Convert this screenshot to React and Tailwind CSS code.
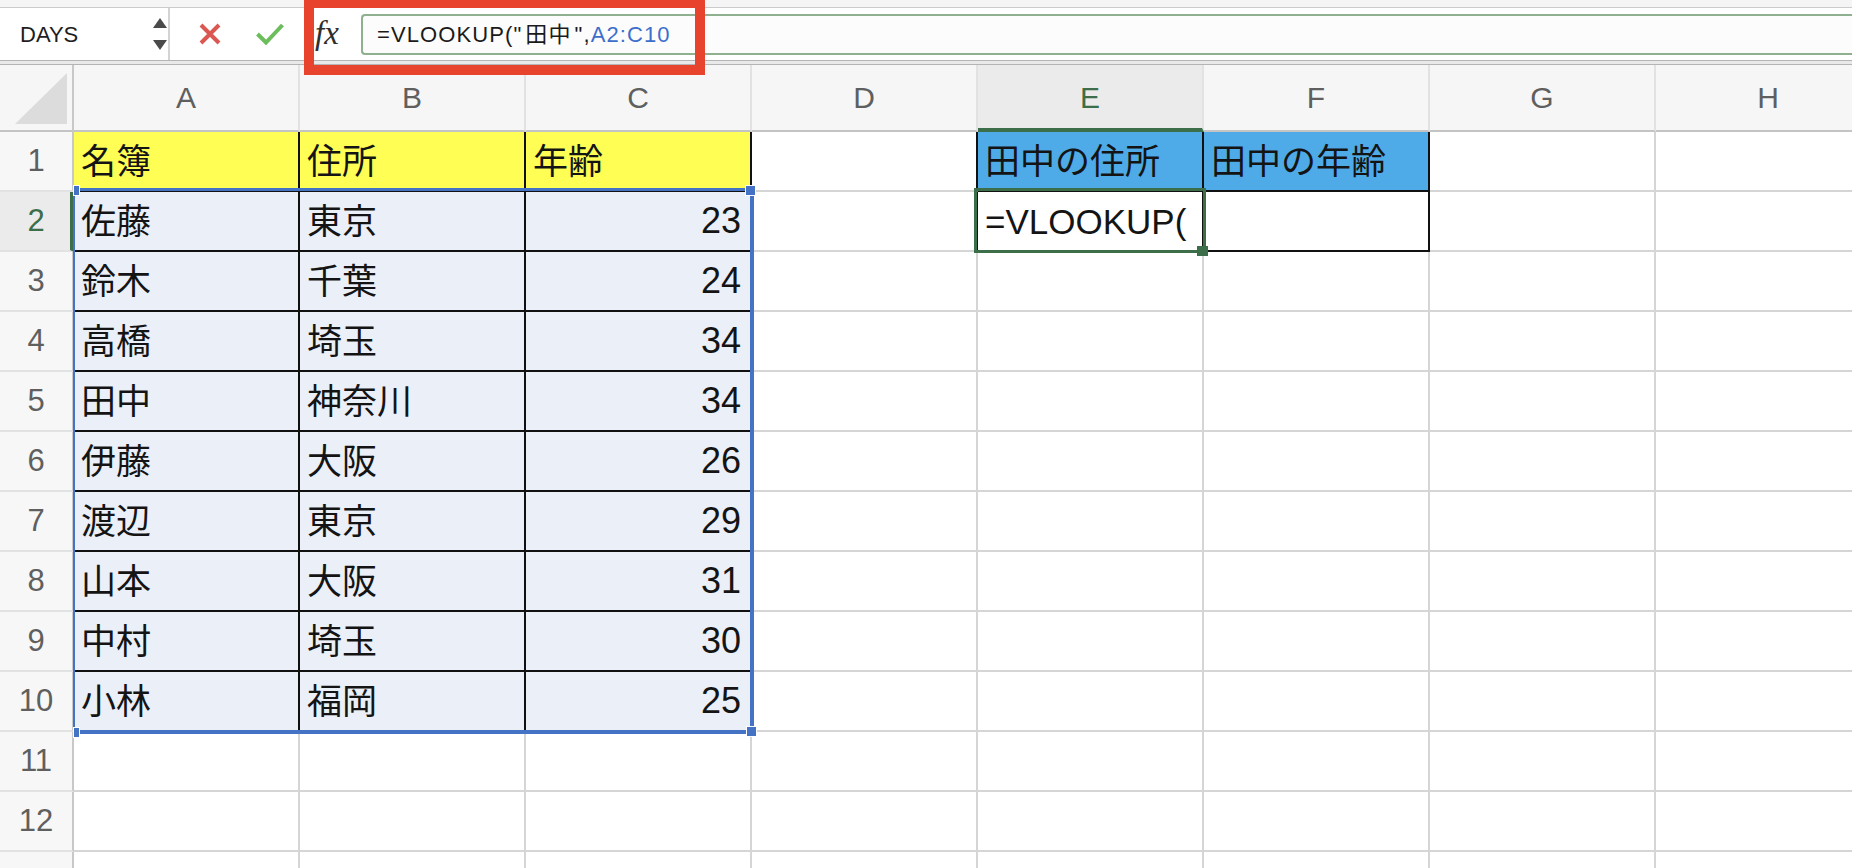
const DATA = [
  ['名簿', '住所', '年齢'],
  ['佐藤', '東京', 23],
  ['鈴木', '千葉', 24],
  ['高橋', '埼玉', 34],
  ['田中', '神奈川', 34],
  ['伊藤', '大阪', 26],
  ['渡辺', '東京', 29],
  ['山本', '大阪', 31],
  ['中村', '埼玉', 30],
  ['小林', '福岡', 25],
];

const COLS = ['A', 'B', 'C', 'D', 'E', 'F', 'G', 'H'];
const ROW_COUNT = 13;

// fill + border colour for each sheet cell
function cellTone(r, c) {
  const inTable = r <= 10 && c <= 2;
  const inLookup = r <= 2 && (c === 4 || c === 5);
  if (inTable && r === 1) return 'bg-[#fefe55] border-[#111]';
  if (inTable) return 'bg-[#ebeff8] border-[#111]';
  if (inLookup && r === 1) return 'bg-[#4eabe8] border-[#111]';
  if (inLookup) return 'bg-white border-[#111]';
  if (r <= 2 && c === 3) return 'bg-white border-[#d5d5d5] border-r-[#111]';
  return 'bg-white border-[#d5d5d5]';
}

function cellValue(r, c) {
  if (r <= 10 && c <= 2) return DATA[r - 1][c];
  if (r === 1 && c === 4) return '田中の住所';
  if (r === 1 && c === 5) return '田中の年齢';
  if (r === 2 && c === 4) return '=VLOOKUP(';
  return null;
}

function Cell({ r, c }) {
  const value = cellValue(r, c);
  const numeric = typeof value === 'number';
  const base = 'flex items-center overflow-hidden whitespace-nowrap border-r-2 border-b-2 leading-none text-[#141414]';
  return (
    <div className={`${base} ${cellTone(r, c)} ${numeric ? 'justify-end pr-[9px] text-[36px]' : 'pl-[7px] text-[35px]'}`}>
      {value}
    </div>
  );
}

function ColumnHeader({ label }) {
  if (label === 'E') {
    return (
      <div className="flex items-center justify-center border-r-2 border-b-4 border-r-[#e2e2e2] border-b-[#3b6e49] bg-[#ebebeb] text-[30px] text-[#3b6e49] pt-[2px]">
        {label}
      </div>
    );
  }
  return (
    <div className="flex items-center justify-center border-r-2 border-b-2 border-r-[#e2e2e2] border-b-[#c4c4c4] bg-[#f6f6f6] text-[30px] text-[#5f5f5f]">
      {label}
    </div>
  );
}

function RowHeader({ n }) {
  if (n === 2) {
    return (
      <div className="flex items-center justify-center border-r-4 border-b-2 border-r-[#3b6e49] border-b-[#e2e2e2] bg-[#ebebeb] text-[31px] text-[#3b6e49] pl-[2px]">
        {n}
      </div>
    );
  }
  return (
    <div className="flex items-center justify-center border-r-2 border-b-2 border-r-[#c8c8c8] border-b-[#e2e2e2] bg-[#f7f7f7] text-[31px] text-[#5f5f5f]">
      {n}
    </div>
  );
}

function FormulaBar() {
  return (
    <div className="h-[65px] bg-[#f5f5f5] flex flex-col">
      <div className="h-[7px]" />
      <div className="h-[53px] border-t border-[#cbcbcb] bg-white flex">
        {/* name box */}
        <div className="w-[168px] flex items-center justify-between pl-[20px] pr-[1px]">
          <span className="text-[22px] text-[#1e1e1e]">DAYS</span>
          <div className="flex flex-col gap-[12px]">
            <svg width="14" height="10" viewBox="0 0 14 10"><path d="M7 0 L14 10 L0 10 Z" fill="#4a4a4a" /></svg>
            <svg width="14" height="10" viewBox="0 0 14 10"><path d="M0 0 L14 0 L7 10 Z" fill="#4a4a4a" /></svg>
          </div>
        </div>
        <div className="w-[2px] bg-[#d3d3d3]" />
        {/* cancel / enter */}
        <div className="w-[134px] flex items-center pl-[29px] gap-[35px]">
          <svg width="22" height="22" viewBox="0 0 22 22">
            <path d="M2 2 L20 20 M20 2 L2 20" stroke="#da5752" strokeWidth="4" />
          </svg>
          <svg width="28" height="22" viewBox="0 0 28 22">
            <path d="M1.5 11 L10 19.5 L26.5 2" stroke="#6cbd5b" strokeWidth="4" fill="none" />
          </svg>
        </div>
        <div className="w-[57px] flex items-center pl-[11px] pb-[2px]">
          <span className="font-['Liberation_Serif',serif] italic text-[33px] text-[#2e2e2e] leading-none">fx</span>
        </div>
        {/* formula input */}
        <div className="flex-1 mt-[6px] mb-[5px] border-2 border-r-0 border-[#8fb18f] rounded-l-[4px] bg-[#fcfcfc] flex items-center pl-[14px]">
          <span className="text-[22px] tracking-[1.1px] text-[#1a1a1a] whitespace-nowrap">
            =VLOOKUP("<span className="mx-[3px]">田中</span>",<span className="text-[#3c6fcb]">A2:C10</span>
          </span>
        </div>
      </div>
      <div className="h-[5px] bg-[#e9e9e9] border-y border-[#b4b4b4]" />
    </div>
  );
}

export default function App() {
  const rows = Array.from({ length: ROW_COUNT }, (_, i) => i + 1);
  return (
    <div className="relative w-[1852px] h-[868px] overflow-hidden bg-white font-['Liberation_Sans','Noto_Sans_CJK_JP',sans-serif]">
      <FormulaBar />

      {/* highlight frame around the fx / formula area */}
      <div className="absolute left-[304px] top-[-2px] w-[401px] h-[77px] border-[10px] border-[#e8432c] z-20" />

      <div className="relative">
        <div className="grid grid-cols-[74px_repeat(8,226px)] grid-rows-[67px_repeat(13,60px)]">
          {/* select-all corner */}
          <div className="flex items-end justify-end pr-[5px] pb-[6px] border-r-2 border-b-2 border-r-[#c8c8c8] border-b-[#c4c4c4] bg-[#f6f6f6]">
            <svg width="52" height="51" viewBox="0 0 52 51"><path d="M52 0 L52 51 L0 51 Z" fill="#dcdcdc" /></svg>
          </div>
          {COLS.map((l) => (
            <ColumnHeader key={l} label={l} />
          ))}

          {rows.map((r) => [
            <RowHeader key={`h${r}`} n={r} />,
            ...COLS.map((_, c) => <Cell key={`${r}-${c}`} r={r} c={c} />),
          ])}
        </div>

        {/* range reference A2:C10 */}
        <div className="absolute left-[73px] top-[123px] w-[681px] h-[546px] border-t-[3px] border-r-4 border-b-4 border-l-2 border-[#4472c4]" />
        <div className="absolute left-[73px] top-[120px] w-[7px] h-[11px] bg-[#4472c4] border border-white" />
        <div className="absolute left-[745px] top-[120px] w-[11px] h-[11px] bg-[#4472c4] border border-white" />
        <div className="absolute left-[73px] top-[662px] w-[7px] h-[11px] bg-[#4472c4] border border-white" />
        <div className="absolute left-[746px] top-[661px] w-[11px] h-[11px] bg-[#4472c4] border border-white" />

        {/* active cell E2 */}
        <div className="absolute left-[974px] top-[123px] w-[232px] h-[65px] border-[3px] border-[#3b6e49]" />
        <div className="absolute left-[1197px] top-[181px] w-[11px] h-[10px] bg-[#3b6e49]" />
      </div>
    </div>
  );
}
